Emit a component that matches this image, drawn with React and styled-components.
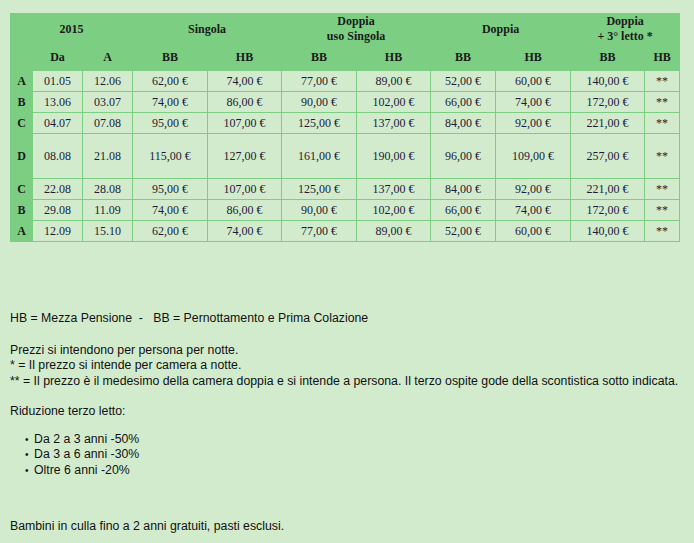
import React from "react";
import styled, { createGlobalStyle } from "styled-components";

const GlobalStyle = createGlobalStyle`
  html, body {
    margin: 0;
    padding: 0;
    background: #d3ebcd;
  }
`;

const Page = styled.div`
  padding: 13px 10px 10px 10px;
  min-height: 543px;
  box-sizing: border-box;
  font-family: "Liberation Sans", Arial, sans-serif;
  font-size: 12.3px;
  line-height: 15.5px;
  color: #111;
`;

const PriceTable = styled.table`
  border-collapse: collapse;
  table-layout: fixed;
  width: 670px;
  font-family: "Liberation Serif", "Times New Roman", serif;
  font-size: 12px;
  line-height: 14px;
  color: #1c1c38;
`;

const HeadCell = styled.th`
  background: #7ccf82;
  font-weight: bold;
  color: #1a1a1a;
  text-align: center;
  padding: 0;
  line-height: 15px;
  height: ${(p) => p.$h}px;
  border: 1px solid #7ccf82;
`;

const LetterCell = styled.th`
  background: #7ccf82;
  font-weight: bold;
  color: #1a1a1a;
  text-align: center;
  padding: 0;
  border: 1px solid #7ccf82;
`;

const Cell = styled.td`
  text-align: center;
  padding: 0;
  border: 1px solid #7ccf82;
  height: ${(p) => p.$h}px;
`;

const Legend = styled.p`
  margin: ${(p) => p.$mt || 0}px 0 0 0;
`;

const Bullets = styled.ul`
  margin: 12px 0 0 0;
  padding: 0 0 0 24px;
  list-style: none;
  li {
    position: relative;
  }
  li::before {
    content: "•";
    position: absolute;
    left: -9px;
    font-size: 10px;
  }
`;

const widths = [22, 50, 50, 75, 74, 75, 74, 65, 75, 74, 35];

const rows = [
  ["A", "01.05", "12.06", "62,00 €", "74,00 €", "77,00 €", "89,00 €", "52,00 €", "60,00 €", "140,00 €", 20],
  ["B", "13.06", "03.07", "74,00 €", "86,00 €", "90,00 €", "102,00 €", "66,00 €", "74,00 €", "172,00 €", 20],
  ["C", "04.07", "07.08", "95,00 €", "107,00 €", "125,00 €", "137,00 €", "84,00 €", "92,00 €", "221,00 €", 20],
  ["D", "08.08", "21.08", "115,00 €", "127,00 €", "161,00 €", "190,00 €", "96,00 €", "109,00 €", "257,00 €", 44],
  ["C", "22.08", "28.08", "95,00 €", "107,00 €", "125,00 €", "137,00 €", "84,00 €", "92,00 €", "221,00 €", 20],
  ["B", "29.08", "11.09", "74,00 €", "86,00 €", "90,00 €", "102,00 €", "66,00 €", "74,00 €", "172,00 €", 20],
  ["A", "12.09", "15.10", "62,00 €", "74,00 €", "77,00 €", "89,00 €", "52,00 €", "60,00 €", "140,00 €", 20],
];

const subHeads = ["", "Da", "A", "BB", "HB", "BB", "HB", "BB", "HB", "BB", "HB"];

export default function App() {
  return (
    <>
      <GlobalStyle />
      <Page>
        <PriceTable>
          <colgroup>
            {widths.map((w, i) => (
              <col key={i} style={{ width: w }} />
            ))}
          </colgroup>
          <thead>
            <tr>
              <HeadCell colSpan={3} $h={30}>2015</HeadCell>
              <HeadCell colSpan={2} $h={30}>Singola</HeadCell>
              <HeadCell colSpan={2} $h={30}>
                Doppia
                <br />
                uso Singola
              </HeadCell>
              <HeadCell colSpan={2} $h={30}>Doppia</HeadCell>
              <HeadCell colSpan={2} $h={30}>
                Doppia
                <br />+ 3° letto *
              </HeadCell>
            </tr>
            <tr>
              {subHeads.map((s, i) => (
                <HeadCell key={i} $h={25}>
                  {s}
                </HeadCell>
              ))}
            </tr>
          </thead>
          <tbody>
            {rows.map((r, i) => (
              <tr key={i}>
                <LetterCell>{r[0]}</LetterCell>
                {r.slice(1, 10).map((v, j) => (
                  <Cell key={j} $h={r[10]}>
                    {v}
                  </Cell>
                ))}
                <Cell $h={r[10]}>**</Cell>
              </tr>
            ))}
          </tbody>
        </PriceTable>

        <Legend $mt={69}>
          HB = Mezza Pensione&nbsp;&nbsp;-&nbsp;&nbsp; BB = Pernottamento e Prima Colazione
        </Legend>
        <Legend $mt={16}>
          Prezzi si intendono per persona per notte.
          <br />* = Il prezzo si intende per camera a notte.
          <br />
          ** = Il prezzo è il medesimo della camera doppia e si intende a persona. Il terzo ospite gode della scontistica sotto indicata.
        </Legend>
        <Legend $mt={15}>Riduzione terzo letto:</Legend>
        <Bullets>
          <li>Da 2 a 3 anni -50%</li>
          <li>Da 3 a 6 anni -30%</li>
          <li>Oltre 6 anni -20%</li>
        </Bullets>
        <Legend $mt={41}>Bambini in culla fino a 2 anni gratuiti, pasti esclusi.</Legend>
      </Page>
    </>
  );
}
